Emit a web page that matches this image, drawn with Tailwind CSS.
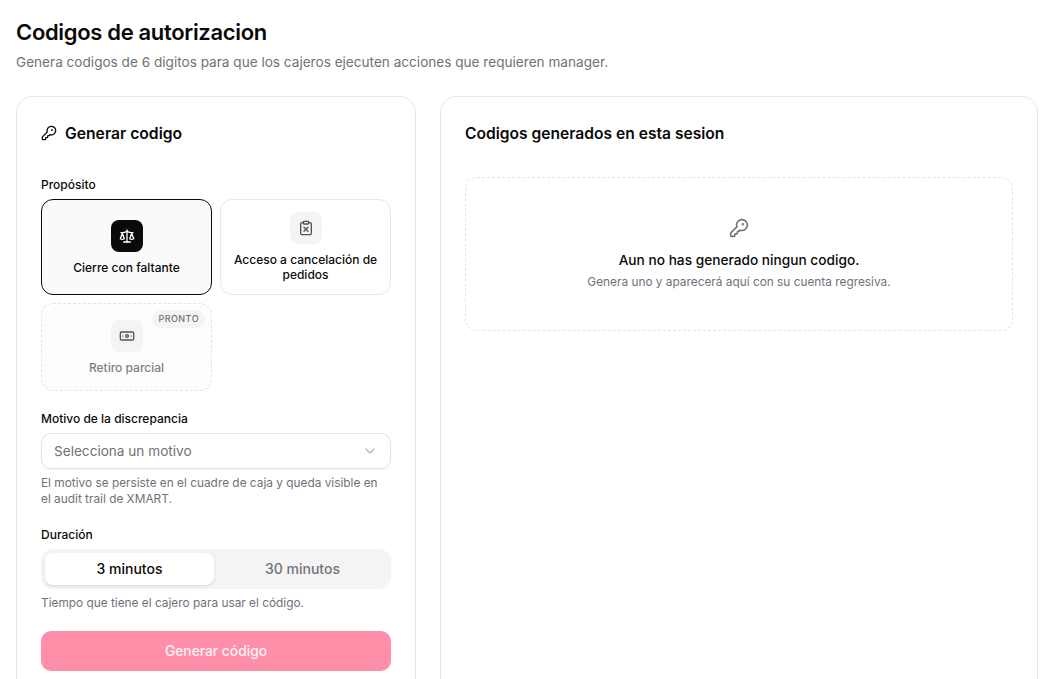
<!DOCTYPE html>
<html lang="es">
<head>
    <meta charset="UTF-8">
    <meta name="viewport" content="width=device-width, initial-scale=1.0">
    <title>Codigos de autorizacion</title>
    <script src="https://cdn.jsdelivr.net/npm/@tailwindcss/browser@4"></script>
</head>
<body class="bg-white h-screen overflow-hidden font-['Inter',sans-serif] text-[#0a0a0a]">
    <div class="px-4 pt-4">
        <h1 class="text-[22px] leading-8 font-semibold tracking-[-0.015em]">Codigos de autorizacion</h1>
        <p class="mt-1 text-[13.6px] leading-5 text-[#71717a]">Genera codigos de 6 digitos para que los cajeros ejecuten acciones que requieren manager.</p>

        <div class="mt-6 flex gap-6 items-start">
            <!-- Generar codigo -->
            <div class="w-[400px] shrink-0 bg-white border border-[#e8e8e8] rounded-2xl p-6">
                <div class="flex items-center gap-2 h-6">
                    <svg xmlns="http://www.w3.org/2000/svg" fill="none" viewBox="0 0 24 24" stroke-width="2" stroke="currentColor" stroke-linecap="round" stroke-linejoin="round" class="w-4 h-4">
                        <path d="M2.586 17.414A2 2 0 0 0 2 18.828V21a1 1 0 0 0 1 1h3a1 1 0 0 0 1-1v-1a1 1 0 0 1 1-1h1a1 1 0 0 0 1-1v-1a1 1 0 0 1 1-1h.172a2 2 0 0 0 1.414-.586l.814-.814a6.5 6.5 0 1 0-4-4z"/><circle cx="16.5" cy="7.5" r=".5" fill="currentColor"/>
                    </svg>
                    <h2 class="mt-0.5 text-[15.7px] leading-6 font-semibold">Generar codigo</h2>
                </div>

                <label class="block mt-8 mb-1.5 text-xs leading-4 font-medium">Propósito</label>
                <div class="grid grid-cols-2 gap-2">
                    <div class="h-[96px] flex flex-col items-center justify-center gap-2 rounded-xl border border-[#0a0a0a] bg-[#fafafa] px-3">
                        <div class="w-8 h-8 rounded-lg bg-[#0a0a0a] text-white flex items-center justify-center">
                            <svg xmlns="http://www.w3.org/2000/svg" fill="none" viewBox="0 0 24 24" stroke-width="2" stroke="currentColor" stroke-linecap="round" stroke-linejoin="round" class="w-4 h-4">
                                <path d="m16 16 3-8 3 8c-.87.65-1.92 1-3 1s-2.13-.35-3-1Z"/><path d="m2 16 3-8 3 8c-.87.65-1.92 1-3 1s-2.13-.35-3-1Z"/><path d="M7 21h10"/><path d="M12 3v18"/><path d="M3 7h2c2 0 5-1 7-2 2 1 5 2 7 2h2"/>
                            </svg>
                        </div>
                        <span class="text-xs leading-[15px] font-[450] text-center">Cierre con faltante</span>
                    </div>
                    <div class="h-[96px] flex flex-col items-center justify-center gap-2 rounded-xl border border-[#e8e8e8] bg-white px-3">
                        <div class="w-8 h-8 rounded-lg bg-[#f4f4f5] text-[#52525b] flex items-center justify-center">
                            <svg xmlns="http://www.w3.org/2000/svg" fill="none" viewBox="0 0 24 24" stroke-width="2" stroke="currentColor" stroke-linecap="round" stroke-linejoin="round" class="w-4 h-4">
                                <rect width="8" height="4" x="8" y="2" rx="1" ry="1"/><path d="M16 4h2a2 2 0 0 1 2 2v14a2 2 0 0 1-2 2H6a2 2 0 0 1-2-2V6a2 2 0 0 1 2-2h2"/><path d="m15 11-6 6"/><path d="m9 11 6 6"/>
                            </svg>
                        </div>
                        <span class="text-xs leading-[15px] font-[450] text-center">Acceso a cancelación de pedidos</span>
                    </div>
                    <div class="relative h-[88px] flex flex-col items-center justify-center gap-2 rounded-xl border border-dashed border-[#e4e4e7] bg-[#fdfdfd] px-3">
                        <span class="absolute top-[6px] right-[6px] h-[18px] px-[6px] rounded-full bg-[#f4f4f5] text-[#71717a] text-[9px] leading-[18px] font-medium tracking-wider">PRONTO</span>
                        <div class="w-8 h-8 rounded-lg bg-[#f4f4f5] text-[#52525b] flex items-center justify-center">
                            <svg xmlns="http://www.w3.org/2000/svg" fill="none" viewBox="0 0 24 24" stroke-width="2" stroke="currentColor" stroke-linecap="round" stroke-linejoin="round" class="w-4 h-4">
                                <rect width="20" height="12" x="2" y="6" rx="2"/><circle cx="12" cy="12" r="2"/><path d="M6 12h.01M18 12h.01"/>
                            </svg>
                        </div>
                        <span class="text-xs leading-[15px] font-[450] text-center text-[#7f7f87]">Retiro parcial</span>
                    </div>
                </div>

                <label class="block mt-5 mb-1.5 text-xs leading-4 font-medium">Motivo de la discrepancia</label>
                <div class="h-9 flex items-center justify-between rounded-[10px] border border-[#e4e4e7] bg-white px-3 shadow-xs">
                    <span class="text-[13.6px] text-[#71717a]">Selecciona un motivo</span>
                    <svg xmlns="http://www.w3.org/2000/svg" fill="none" viewBox="0 0 24 24" stroke-width="2" stroke="currentColor" stroke-linecap="round" stroke-linejoin="round" class="w-4 h-4 text-[#b4b4bb]">
                        <path d="m6 9 6 6 6-6"/>
                    </svg>
                </div>
                <p class="mt-1.5 pr-2 text-[11.85px] leading-4 text-[#71717a]">El motivo se persiste en el cuadre de caja y queda visible en el audit trail de XMART.</p>

                <label class="block mt-5 mb-1.5 text-xs leading-4 font-medium">Duración</label>
                <div class="h-10 grid grid-cols-2 gap-1 p-1 rounded-xl bg-[#f4f4f5]">
                    <div class="flex items-center justify-center rounded-lg bg-white shadow-sm text-sm font-[450]">3 minutos</div>
                    <div class="flex items-center justify-center text-sm font-[450] text-[#71717a]">30 minutos</div>
                </div>
                <p class="mt-1.5 text-[11.85px] leading-4 text-[#71717a]">Tiempo que tiene el cajero para usar el código.</p>

                <button class="mt-5 w-full h-10 rounded-[10px] bg-[#ff8fa8] text-white/90 text-[13.8px] font-[450]">Generar código</button>
            </div>

            <!-- Codigos generados -->
            <div class="flex-1 h-[800px] bg-white border border-[#e8e8e8] rounded-2xl p-6">
                <h2 class="text-[15.6px] leading-[26px] font-semibold">Codigos generados en esta sesion</h2>
                <div class="mt-[30px] h-[154px] flex flex-col items-center justify-center rounded-xl border border-dashed border-[#e4e4e7]">
                    <svg xmlns="http://www.w3.org/2000/svg" fill="none" viewBox="0 0 24 24" stroke-width="2" stroke="currentColor" stroke-linecap="round" stroke-linejoin="round" class="w-5 h-5 text-[#71717a]">
                        <path d="M2.586 17.414A2 2 0 0 0 2 18.828V21a1 1 0 0 0 1 1h3a1 1 0 0 0 1-1v-1a1 1 0 0 1 1-1h1a1 1 0 0 0 1-1v-1a1 1 0 0 1 1-1h.172a2 2 0 0 0 1.414-.586l.814-.814a6.5 6.5 0 1 0-4-4z"/><circle cx="16.5" cy="7.5" r=".5" fill="currentColor"/>
                    </svg>
                    <p class="mt-3 text-[13.7px] leading-5 font-[450]">Aun no has generado ningun codigo.</p>
                    <p class="mt-1 text-[11.85px] leading-4 text-[#71717a]">Genera uno y aparecerá aquí con su cuenta regresiva.</p>
                </div>
            </div>
        </div>
    </div>
</body>
</html>
